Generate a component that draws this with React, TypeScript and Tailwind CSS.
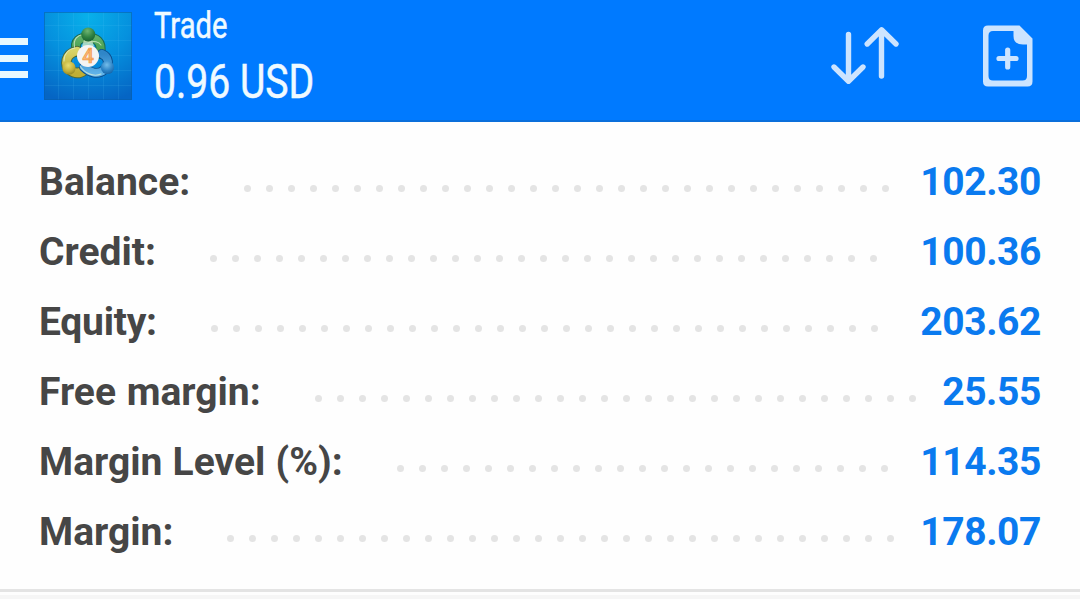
import React from 'react';

interface AccountRow {
  label: string;
  value: string;
  dots: number;
  labelClass?: string;
}

const rows: AccountRow[] = [
  { label: 'Balance:', value: '102.30', dots: 30 },
  { label: 'Credit:', value: '100.36', dots: 31 },
  { label: 'Equity:', value: '203.62', dots: 31, labelClass: 'tracking-[-0.25px]' },
  { label: 'Free margin:', value: '25.55', dots: 28, labelClass: '[word-spacing:1px]' },
  { label: 'Margin Level (%):', value: '114.35', dots: 23, labelClass: '[word-spacing:0.5px]' },
  { label: 'Margin:', value: '178.07', dots: 31 },
];

const AppLogo: React.FC = () => (
  <svg viewBox="0 0 88 88" className="w-[88px] h-[88px]">
    <defs>
      <radialGradient id="tile" cx="0.5" cy="0.05" r="1">
        <stop offset="0" stopColor="#08b0ea" />
        <stop offset="0.5" stopColor="#0590de" />
        <stop offset="1" stopColor="#0565c4" />
      </radialGradient>
      <linearGradient id="green" x1="0" y1="0" x2="0" y2="1">
        <stop offset="0" stopColor="#5fb068" />
        <stop offset="1" stopColor="#3f9a4a" />
      </linearGradient>
      <linearGradient id="gold" x1="0" y1="0" x2="0" y2="1">
        <stop offset="0" stopColor="#d8d468" />
        <stop offset="1" stopColor="#c0ae34" />
      </linearGradient>
      <linearGradient id="blue" x1="0" y1="0" x2="0" y2="1">
        <stop offset="0" stopColor="#2f86c8" />
        <stop offset="1" stopColor="#5fb2e8" />
      </linearGradient>
      <radialGradient id="greenBall" cx="0.45" cy="0.25" r="0.75">
        <stop offset="0" stopColor="#6fb573" />
        <stop offset="0.6" stopColor="#2f8242" />
        <stop offset="1" stopColor="#1a6132" />
      </radialGradient>
      <radialGradient id="goldBall" cx="0.45" cy="0.3" r="0.75">
        <stop offset="0" stopColor="#e6de72" />
        <stop offset="0.6" stopColor="#c2b03a" />
        <stop offset="1" stopColor="#8f8220" />
      </radialGradient>
      <radialGradient id="blueBall" cx="0.45" cy="0.3" r="0.75">
        <stop offset="0" stopColor="#74bdea" />
        <stop offset="0.6" stopColor="#2c83c6" />
        <stop offset="1" stopColor="#1261a5" />
      </radialGradient>
    </defs>
    <rect width="88" height="88" fill="url(#tile)" />
    <path
      d="M14.5 0V88M29.5 0V88M44.5 0V88M59.5 0V88M74.5 0V88M0 13.5H88M0 28.5H88M0 43.5H88M0 58.5H88M0 73.5H88"
      stroke="#5cc8f5"
      strokeOpacity="0.13"
      fill="none"
    />
    <rect x="0.5" y="0.5" width="87" height="87" fill="none" stroke="#075fae" strokeOpacity="0.6" />
    <g fill="none" strokeLinecap="round">
      <path d="M33 40C29 28 37 25.5 44 25.5S59 29 56 42" stroke="#1b6a52" strokeWidth="10" />
      <path d="M33 40C29 28 37 25.5 44 25.5S59 29 56 42" stroke="url(#green)" strokeWidth="8" />
      <path d="M33 39C21 42 20 53 26 58S37 61 41 58" stroke="#4c6a3c" strokeWidth="10.5" />
      <path d="M33 39C21 42 20 53 26 58S37 61 41 58" stroke="url(#gold)" strokeWidth="8.5" />
      <path d="M40 55C46 61 54 63 60 58S65 45 58 42" stroke="#0b4f8e" strokeWidth="10" />
      <path d="M40 55C46 61 54 63 60 58S65 45 58 42" stroke="url(#blue)" strokeWidth="8" />
      <path
        d="M36 54C41 62 50 65 57 62M31 36C24 37 20 42 20 49M30.500 35C29 27 34 23 39 22.500M57 33C55 30 50 28 44 31"
        stroke="#e4f2d8"
        strokeOpacity="0.7"
        strokeWidth="1.1"
      />
    </g>
    <path d="M40 28H48L50 34H38Z" fill="#c9e6bf" fillOpacity="0.8" />
    <circle cx="44.200" cy="22.500" r="7" fill="url(#greenBall)" />
    <circle cx="25" cy="56" r="6.600" fill="url(#goldBall)" />
    <circle cx="63.500" cy="55.500" r="6.600" fill="url(#blueBall)" />
    <circle cx="44" cy="44" r="11" fill="#f5f4f3" />
    <text
      x="44"
      y="51.2"
      textAnchor="middle"
      fontSize="20.500"
      fontWeight="500"
      fill="#fbb878"
      stroke="#f29a48"
      strokeWidth="0.7"
      className="font-['Roboto',sans-serif]"
    >
      4
    </text>
  </svg>
);

const SortIcon: React.FC = () => (
  <svg viewBox="0 0 70 60" className="w-[70px] h-[60px]" fill="none" stroke="#cce4ff" strokeWidth="5.4" strokeLinecap="round" strokeLinejoin="round">
    <path d="M18.5 9.5V55M4 42L18.5 56.2L33 42" />
    <path d="M51.5 51V5M37.2 19L51.5 4.8L66 19" />
  </svg>
);

const NewOrderIcon: React.FC = () => (
  <svg viewBox="0 0 50 62" className="w-[50px] h-[62px]" fill="none" stroke="#cce4ff">
    <path
      d="M5 0.5H36.5L49.5 13.5V56.5Q49.5 61.5 44.5 61.5H5Q0 61.5 0 56.5V5.5Q0 0.5 5 0.5ZM10 6Q5.5 6 5.5 10.5V51Q5.5 55.5 10 55.5H39.5Q44 55.5 44 51V19.5H40Q30.5 19.5 30.5 11V6Z"
      fill="#cce4ff"
      fillRule="evenodd"
      stroke="none"
    />
    <path d="M16 33.5H33M24.7 25V42" strokeWidth="5.2" strokeLinecap="round" />
  </svg>
);

const App: React.FC = () => {
  return (
    <div className="w-full h-[599px] flex flex-col overflow-hidden bg-[#fefefe] font-['Roboto',sans-serif]">
      <header className="h-[122px] shrink-0 flex items-start bg-[#007aff] border-b-2 border-[#0a6fdb]">
        <div className="w-7 mt-[38px] flex flex-col gap-[9.5px]">
          <span className="h-[7px] bg-[#e8f8ff]" />
          <span className="h-[7px] bg-[#e8f8ff]" />
          <span className="h-[7px] bg-[#e8f8ff]" />
        </div>
        <div className="ml-4 mt-3">
          <AppLogo />
        </div>
        <div className="ml-[22px] mt-1 flex flex-col text-[#f0faff] whitespace-nowrap [-webkit-text-stroke:0.5px_#f0faff]">
          <span className="h-11 text-[36px] leading-[44px] origin-left scale-x-[0.81]">Trade</span>
          <span className="h-[66px] text-[48px] leading-[68px] origin-left scale-x-[0.815]">0.96 USD</span>
        </div>
        <div className="ml-auto mr-[47px] flex items-start gap-[83px]">
          <div className="mt-[25px]">
            <SortIcon />
          </div>
          <div className="mt-[25px]">
            <NewOrderIcon />
          </div>
        </div>
      </header>

      <main className="flex-1 pt-[25px] pl-[39px] pr-[39px]">
        {rows.map((row) => (
          <div key={row.label} className="h-[70px] flex items-center text-[39px] font-bold whitespace-nowrap">
            <span className={`text-[#464646] ${row.labelClass ?? ''}`}>{row.label}</span>
            <div className="ml-[54px] mt-[13px] flex gap-[15px]">
              {Array.from({ length: row.dots }, (_, i) => (
                <span key={i} className="w-[7px] h-[7px] shrink-0 rounded-full bg-[#e4e4e4]" />
              ))}
            </div>
            <span className="ml-auto text-[#0a7aef] tracking-[-0.4px]">{row.value}</span>
          </div>
        ))}
      </main>

      <footer className="h-[10px] shrink-0 border-t-[3px] border-[#e4e4e4] flex flex-col justify-end">
        <div className="h-1 bg-[#f6f6f6]" />
      </footer>
    </div>
  );
};

export default App;
